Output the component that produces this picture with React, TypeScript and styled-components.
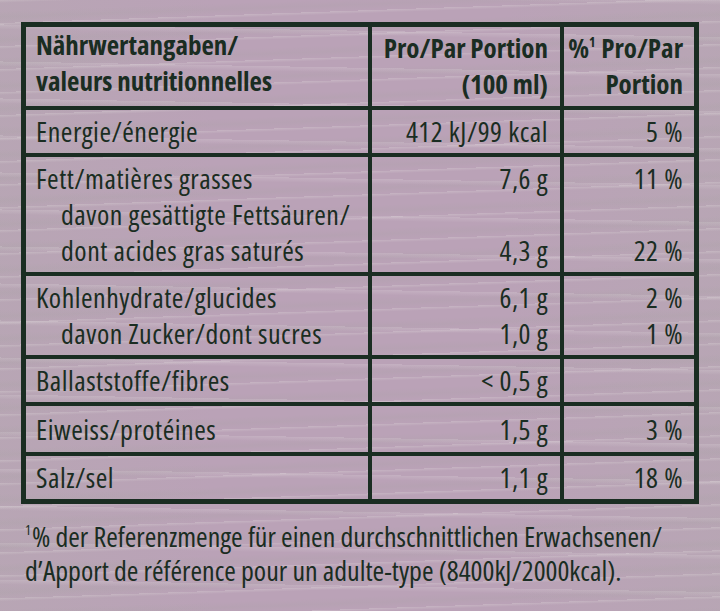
import styled, { createGlobalStyle } from 'styled-components';

const ink = '#1a2d22';

const GlobalStyle = createGlobalStyle`
  * { box-sizing: border-box; }
  body {
    margin: 0;
    min-height: 611px;
    background-color: #baa2b7;
    background-image:
      repeating-linear-gradient(178deg, rgba(238, 238, 232, 0.22) 0px, rgba(238, 238, 232, 0) 3px, rgba(0, 0, 0, 0) 11px, rgba(150, 160, 145, 0.1) 17px, rgba(0, 0, 0, 0) 23px),
      repeating-linear-gradient(181deg, rgba(248, 248, 244, 0.16) 0px, rgba(0, 0, 0, 0) 5px, rgba(0, 0, 0, 0) 37px),
      linear-gradient(90deg, rgba(175, 180, 170, 0.2), rgba(0, 0, 0, 0) 30%, rgba(0, 0, 0, 0) 70%, rgba(175, 180, 170, 0.2));
    font-family: "Open Sans", "Noto Sans", sans-serif;
    font-stretch: condensed;
    color: ${ink};
  }
`;

const Page = styled.div`
  padding: 22px 21px 0 21px;
`;

const Table = styled.table`
  width: 678px;
  table-layout: fixed;
  border-collapse: separate;
  border-spacing: 0;
  border: 5px solid ${ink};
`;

const Cell = styled.td<{ $head?: boolean; $tall?: boolean }>`
  vertical-align: top;
  font-size: ${(p) => (p.$head ? 27 : 28)}px;
  letter-spacing: ${(p) => (p.$head ? 0 : 0.5)}px;
  line-height: 36px;
  padding: ${(p) => (p.$head ? '0 0 7px' : p.$tall ? '5px 0 5px' : '3px 0 4px')};
  border-top: 4px solid ${ink};
  border-right: 4px solid ${ink};
  white-space: nowrap;

  tr:first-child > & {
    border-top: none;
  }
  &:nth-child(1) {
    width: 346px;
    padding-left: 10px;
    text-align: left;
    font-weight: ${(p) => (p.$head ? 700 : 400)};
  }
  &:nth-child(2) {
    width: 192px;
    padding-right: 12px;
    text-align: right;
  }
  &:nth-child(3) {
    width: 130px;
    padding-right: 11px;
    text-align: right;
    border-right: none;
  }
`;

const HeadText = styled.div`
  font-weight: 700;
  transform: translateY(3px);
`;

const Line = styled.div<{ $indent?: boolean }>`
  padding-left: ${(p) => (p.$indent ? '25px' : '0')};
  min-height: 36px;
`;

const Sup = styled.sup`
  font-size: 0.5em;
  line-height: 0;
  vertical-align: 0.85em;
  margin-right: 1px;
`;

const Footnote = styled.p`
  margin: 15px 0 0 4px;
  font-size: 28px;
  line-height: 34px;
  white-space: nowrap;
`;

interface LabelLine {
  text: string;
  indent?: boolean;
}

interface Nutrient {
  label: LabelLine[];
  amount: string[];
  percent: string[];
  tall?: boolean;
}

const nutrients: Nutrient[] = [
  { label: [{ text: 'Energie/énergie' }], amount: ['412 kJ/99 kcal'], percent: ['5 %'] },
  {
    label: [
      { text: 'Fett/matières grasses' },
      { text: 'davon gesättigte Fettsäuren/', indent: true },
      { text: 'dont acides gras saturés', indent: true },
    ],
    amount: ['7,6 g', '', '4,3 g'],
    percent: ['11 %', '', '22 %'],
  },
  {
    label: [{ text: 'Kohlenhydrate/glucides' }, { text: 'davon Zucker/dont sucres', indent: true }],
    amount: ['6,1 g', '1,0 g'],
    percent: ['2 %', '1 %'],
  },
  { label: [{ text: 'Ballaststoffe/fibres' }], amount: ['< 0,5 g'], percent: [''] },
  { label: [{ text: 'Eiweiss/protéines' }], amount: ['1,5 g'], percent: ['3 %'], tall: true },
  { label: [{ text: 'Salz/sel' }], amount: ['1,1 g'], percent: ['18 %'] },
];

function App() {
  return (
    <Page>
      <GlobalStyle />
      <Table>
        <tbody>
          <tr>
            <Cell $head>
              <Line>Nährwertangaben/</Line>
              <Line>valeurs nutritionnelles</Line>
            </Cell>
            <Cell $head>
              <HeadText>
                <Line>Pro/Par Portion</Line>
                <Line>(100 ml)</Line>
              </HeadText>
            </Cell>
            <Cell $head>
              <HeadText>
                <Line>
                  %<Sup>1</Sup> Pro/Par
                </Line>
                <Line>Portion</Line>
              </HeadText>
            </Cell>
          </tr>
          {nutrients.map((n) => (
            <tr key={n.label[0].text}>
              <Cell $tall={n.tall}>
                {n.label.map((l) => (
                  <Line key={l.text} $indent={l.indent}>
                    {l.text}
                  </Line>
                ))}
              </Cell>
              <Cell $tall={n.tall}>
                {n.amount.map((a, i) => (
                  <Line key={i}>{a}</Line>
                ))}
              </Cell>
              <Cell $tall={n.tall}>
                {n.percent.map((p, i) => (
                  <Line key={i}>{p}</Line>
                ))}
              </Cell>
            </tr>
          ))}
        </tbody>
      </Table>
      <Footnote>
        <Sup>1</Sup>% der Referenzmenge für einen durchschnittlichen Erwachsenen/
        <br />
        d’Apport de référence pour un adulte-type (8400kJ/2000kcal).
      </Footnote>
    </Page>
  );
}

export default App;
